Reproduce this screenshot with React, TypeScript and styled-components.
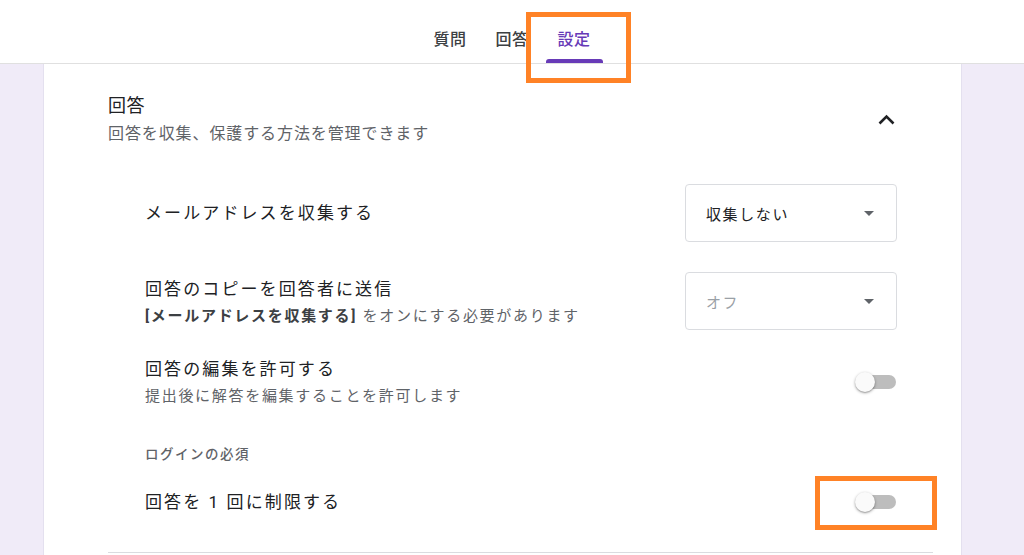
import styled, { createGlobalStyle } from "styled-components";

const GlobalStyle = createGlobalStyle`
  html, body {
    margin: 0;
    padding: 0;
  }
  body {
    background: #f0ebf8;
    font-family: Roboto, "Noto Sans CJK JP", sans-serif;
    color: #202124;
  }
`;

const SPage = styled.div`
  width: 1024px;
  height: 555px;
  overflow: hidden;
  background: #f0ebf8;
`;

const SHeader = styled.header`
  position: relative;
  z-index: 2;
  height: 63px;
  background: #fff;
  border-bottom: 1px solid #e0e0e0;
  display: flex;
  justify-content: center;
  gap: 5px;
`;

const STab = styled.div<{ $active?: boolean }>`
  position: relative;
  padding: 28px 12px 0;
  box-sizing: border-box;
  height: 63px;
  font-size: 16px;
  line-height: 24px;
  letter-spacing: 0.5px;
  font-weight: 500;
  color: ${(p) => (p.$active ? "#673ab7" : "#3c4043")};
  &::after {
    content: "";
    display: ${(p) => (p.$active ? "block" : "none")};
    position: absolute;
    left: 0;
    right: 0;
    bottom: 0;
    height: 4px;
    border-radius: 3px 3px 0 0;
    background: #673ab7;
  }
`;

// orange callout frame drawn over the screenshot
const SHighlight = styled.div<{ $left: number; $top: number; $w: number; $h: number }>`
  position: absolute;
  left: ${(p) => p.$left}px;
  top: ${(p) => p.$top}px;
  width: ${(p) => p.$w}px;
  height: ${(p) => p.$h}px;
  box-sizing: border-box;
  border: 5px solid #ff8226;
  pointer-events: none;
  z-index: 3;
`;

const SCard = styled.section`
  margin-left: 43px;
  width: 919px;
  box-sizing: border-box;
  background: #fff;
  border-left: 1px solid #e4e0ef;
  border-right: 1px solid #e4e0ef;
  padding: 30px 28px 0 64px;
  height: 491px;
`;

const SSectionHead = styled.div`
  display: flex;
  align-items: center;
  justify-content: space-between;
  padding-right: 36px;
`;

const STitle = styled.h2`
  margin: 0;
  font-size: 18px;
  line-height: 24px;
  letter-spacing: 0.5px;
  font-weight: 400;
  color: #202124;
`;

const SSubText = styled.p`
  margin: 6px 0 0;
  font-size: 15px;
  line-height: 20px;
  letter-spacing: 1.7px;
  color: #5f6368;
  b {
    font-weight: 700;
    color: #3c4043;
  }
`;

const SHeadSub = styled(SSubText)`
  font-size: 16px;
  letter-spacing: 0.9px;
`;

const SChevron = styled.svg`
  width: 17px;
  height: 11px;
  margin-right: 2px;
`;

const SRows = styled.div`
  padding: 0 36px 0 37px;
`;

const SRow = styled.div<{ $gap: number }>`
  display: flex;
  align-items: center;
  justify-content: space-between;
  margin-top: ${(p) => p.$gap}px;
`;

const SLabel = styled.div`
  font-size: 17px;
  line-height: 24px;
  letter-spacing: 2.1px;
  color: #202124;
`;

const SRowSub = styled(SSubText)`
  margin-top: 5px;
`;

const SGroupLabel = styled.div`
  margin-top: 38px;
  font-size: 13.5px;
  line-height: 20px;
  letter-spacing: 1.5px;
  font-weight: 500;
  color: #5f6368;
`;

const SSelect = styled.div<{ $muted?: boolean }>`
  width: 212px;
  height: 58px;
  box-sizing: border-box;
  border: 1px solid #dadce0;
  border-radius: 4px;
  padding: 0 22px 0 20px;
  display: flex;
  align-items: center;
  justify-content: space-between;
  font-size: 15px;
  letter-spacing: 1.6px;
  color: ${(p) => (p.$muted ? "#9aa0a6" : "#202124")};
  &::after {
    content: "";
    width: 0;
    height: 0;
    border-left: 5px solid transparent;
    border-right: 5px solid transparent;
    border-top: 5px solid #5f6368;
  }
`;

const SToggle = styled.div`
  position: relative;
  width: 41px;
  height: 20px;
  margin-right: 1px;
  flex-shrink: 0;
`;

const STrack = styled.span`
  position: absolute;
  right: 0;
  top: 3px;
  width: 34px;
  height: 14px;
  border-radius: 7px;
  background: #bdbdbd;
`;

const SKnob = styled.span`
  position: absolute;
  left: 0;
  top: 0;
  width: 20px;
  height: 20px;
  border-radius: 50%;
  background: #fafafa;
  box-shadow: 0 1px 3px rgba(0, 0, 0, 0.35), 0 1px 1px rgba(0, 0, 0, 0.14);
`;

const SDivider = styled.hr`
  margin: 38px 0 0;
  border: none;
  height: 1px;
  background: #dadce0;
`;

const Toggle = ({ highlighted }: { highlighted?: boolean }) => (
  <SToggle>
    <STrack />
    <SKnob />
    {highlighted && <SHighlight $left={-40} $top={-16} $w={122} $h={54} />}
  </SToggle>
);

export default function App() {
  return (
    <SPage>
      <GlobalStyle />
      <SHeader>
        <STab>質問</STab>
        <STab>回答</STab>
        <STab $active>
          設定
          <SHighlight $left={-20} $top={12} $w={105} $h={71} />
        </STab>
      </SHeader>
      <SCard>
        <SSectionHead>
          <div>
            <STitle>回答</STitle>
            <SHeadSub>回答を収集、保護する方法を管理できます</SHeadSub>
          </div>
          <SChevron viewBox="0 0 17 11">
            <polyline
              points="1.5,9.5 8.5,2.5 15.5,9.5"
              fill="none"
              stroke="#202124"
              strokeWidth="2.6"
            />
          </SChevron>
        </SSectionHead>
        <SRows>
          <SRow $gap={40}>
            <SLabel>メールアドレスを収集する</SLabel>
            <SSelect>収集しない</SSelect>
          </SRow>
          <SRow $gap={30}>
            <div>
              <SLabel>回答のコピーを回答者に送信</SLabel>
              <SRowSub>
                <b>[メールアドレスを収集する]</b> をオンにする必要があります
              </SRowSub>
            </div>
            <SSelect $muted>オフ</SSelect>
          </SRow>
          <SRow $gap={27}>
            <div>
              <SLabel>回答の編集を許可する</SLabel>
              <SRowSub>提出後に解答を編集することを許可します</SRowSub>
            </div>
            <Toggle />
          </SRow>
          <SGroupLabel>ログインの必須</SGroupLabel>
          <SRow $gap={26}>
            <SLabel>回答を 1 回に制限する</SLabel>
            <Toggle highlighted />
          </SRow>
        </SRows>
        <SDivider />
      </SCard>
    </SPage>
  );
}
